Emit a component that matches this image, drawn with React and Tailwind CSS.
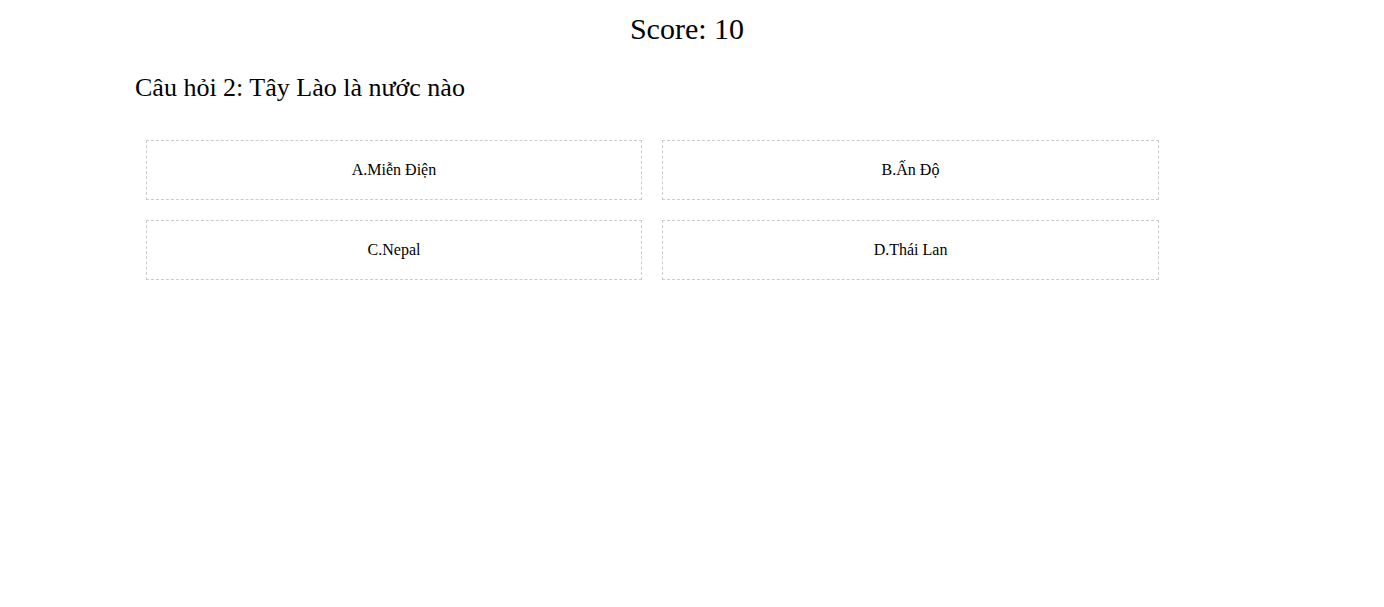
export default function App() {
  const opts = ["A.Miễn Điện", "B.Ấn Độ", "C.Nepal", "D.Thái Lan"];
  return (
    <div className="w-[1384px] h-[607px] bg-white text-black" style={{ fontFamily: '"Liberation Serif", "Times New Roman", serif' }}>
      <div className="pt-[11px] text-center text-[30px] leading-[35px] pr-[10px]">Score: 10</div>
      <div className="pl-[135px] mt-[27px] text-[26px] leading-[30px]">Câu hỏi 2: Tây Lào là nước nào</div>
      <div className="ml-[146px] mt-[37px] grid grid-cols-[496px_497px] gap-x-[20px] gap-y-[20px]">
        {opts.map((o) => (
          <div key={o} className="h-[60px] border border-dashed border-[#cccccc] flex items-center justify-center text-[16px]">
            {o}
          </div>
        ))}
      </div>
    </div>
  );
}
